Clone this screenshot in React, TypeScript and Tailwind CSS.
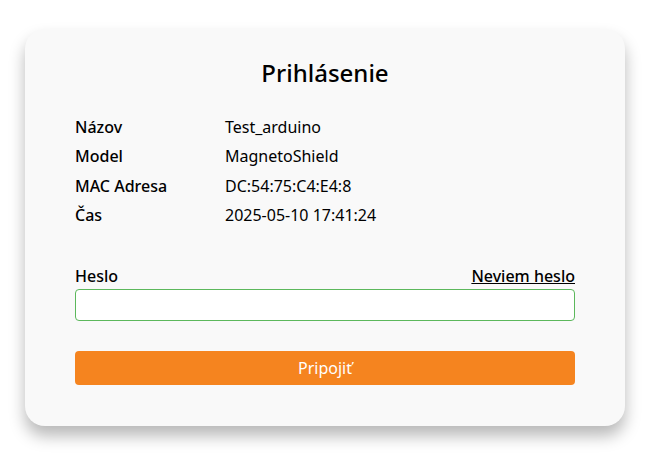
import React from 'react'

const rows = [
    ['Názov', 'Test_arduino'],
    ['Model', 'MagnetoShield'],
    ['MAC Adresa', 'DC:54:75:C4:E4:8'],
    ['Čas', '2025-05-10 17:41:24'],
]

export default function App() {
    return (
        <div className="min-h-[466px] bg-white pt-[29px] pl-[25px] font-['Noto_Sans',sans-serif] text-black">
            <div className="w-[600px] rounded-[20px] bg-[#f9f9f9] px-[50px] pt-[28px] pb-[41px] shadow-[0_10px_16px_rgba(0,0,0,0.28)]">
                <h1 className="text-center text-[24px] font-medium leading-[32px]">Prihlásenie</h1>

                {/* Device info */}
                <div className="mt-[23px] flex flex-col">
                    {rows.map(([label, value]) => (
                        <div key={label} className="flex h-[29.5px] items-center text-[16px]">
                            <span className="w-[150px] font-medium">{label}</span>
                            <span>{value}</span>
                        </div>
                    ))}
                </div>

                <div className="mt-[34px] flex items-center justify-between text-[16px] font-medium leading-[24px]">
                    <span>Heslo</span>
                    <a href="#" className="underline">Neviem heslo</a>
                </div>
                <input
                    type="password"
                    className="mt-[1px] block h-[32px] w-full rounded-[4px] border border-[#5cb85c] bg-white px-2 outline-none"
                />

                <button className="mt-[30px] block h-[34px] w-full rounded-[4px] bg-[#f5841f] text-[16px] text-white">
                    Pripojiť
                </button>
            </div>
        </div>
    )
}
